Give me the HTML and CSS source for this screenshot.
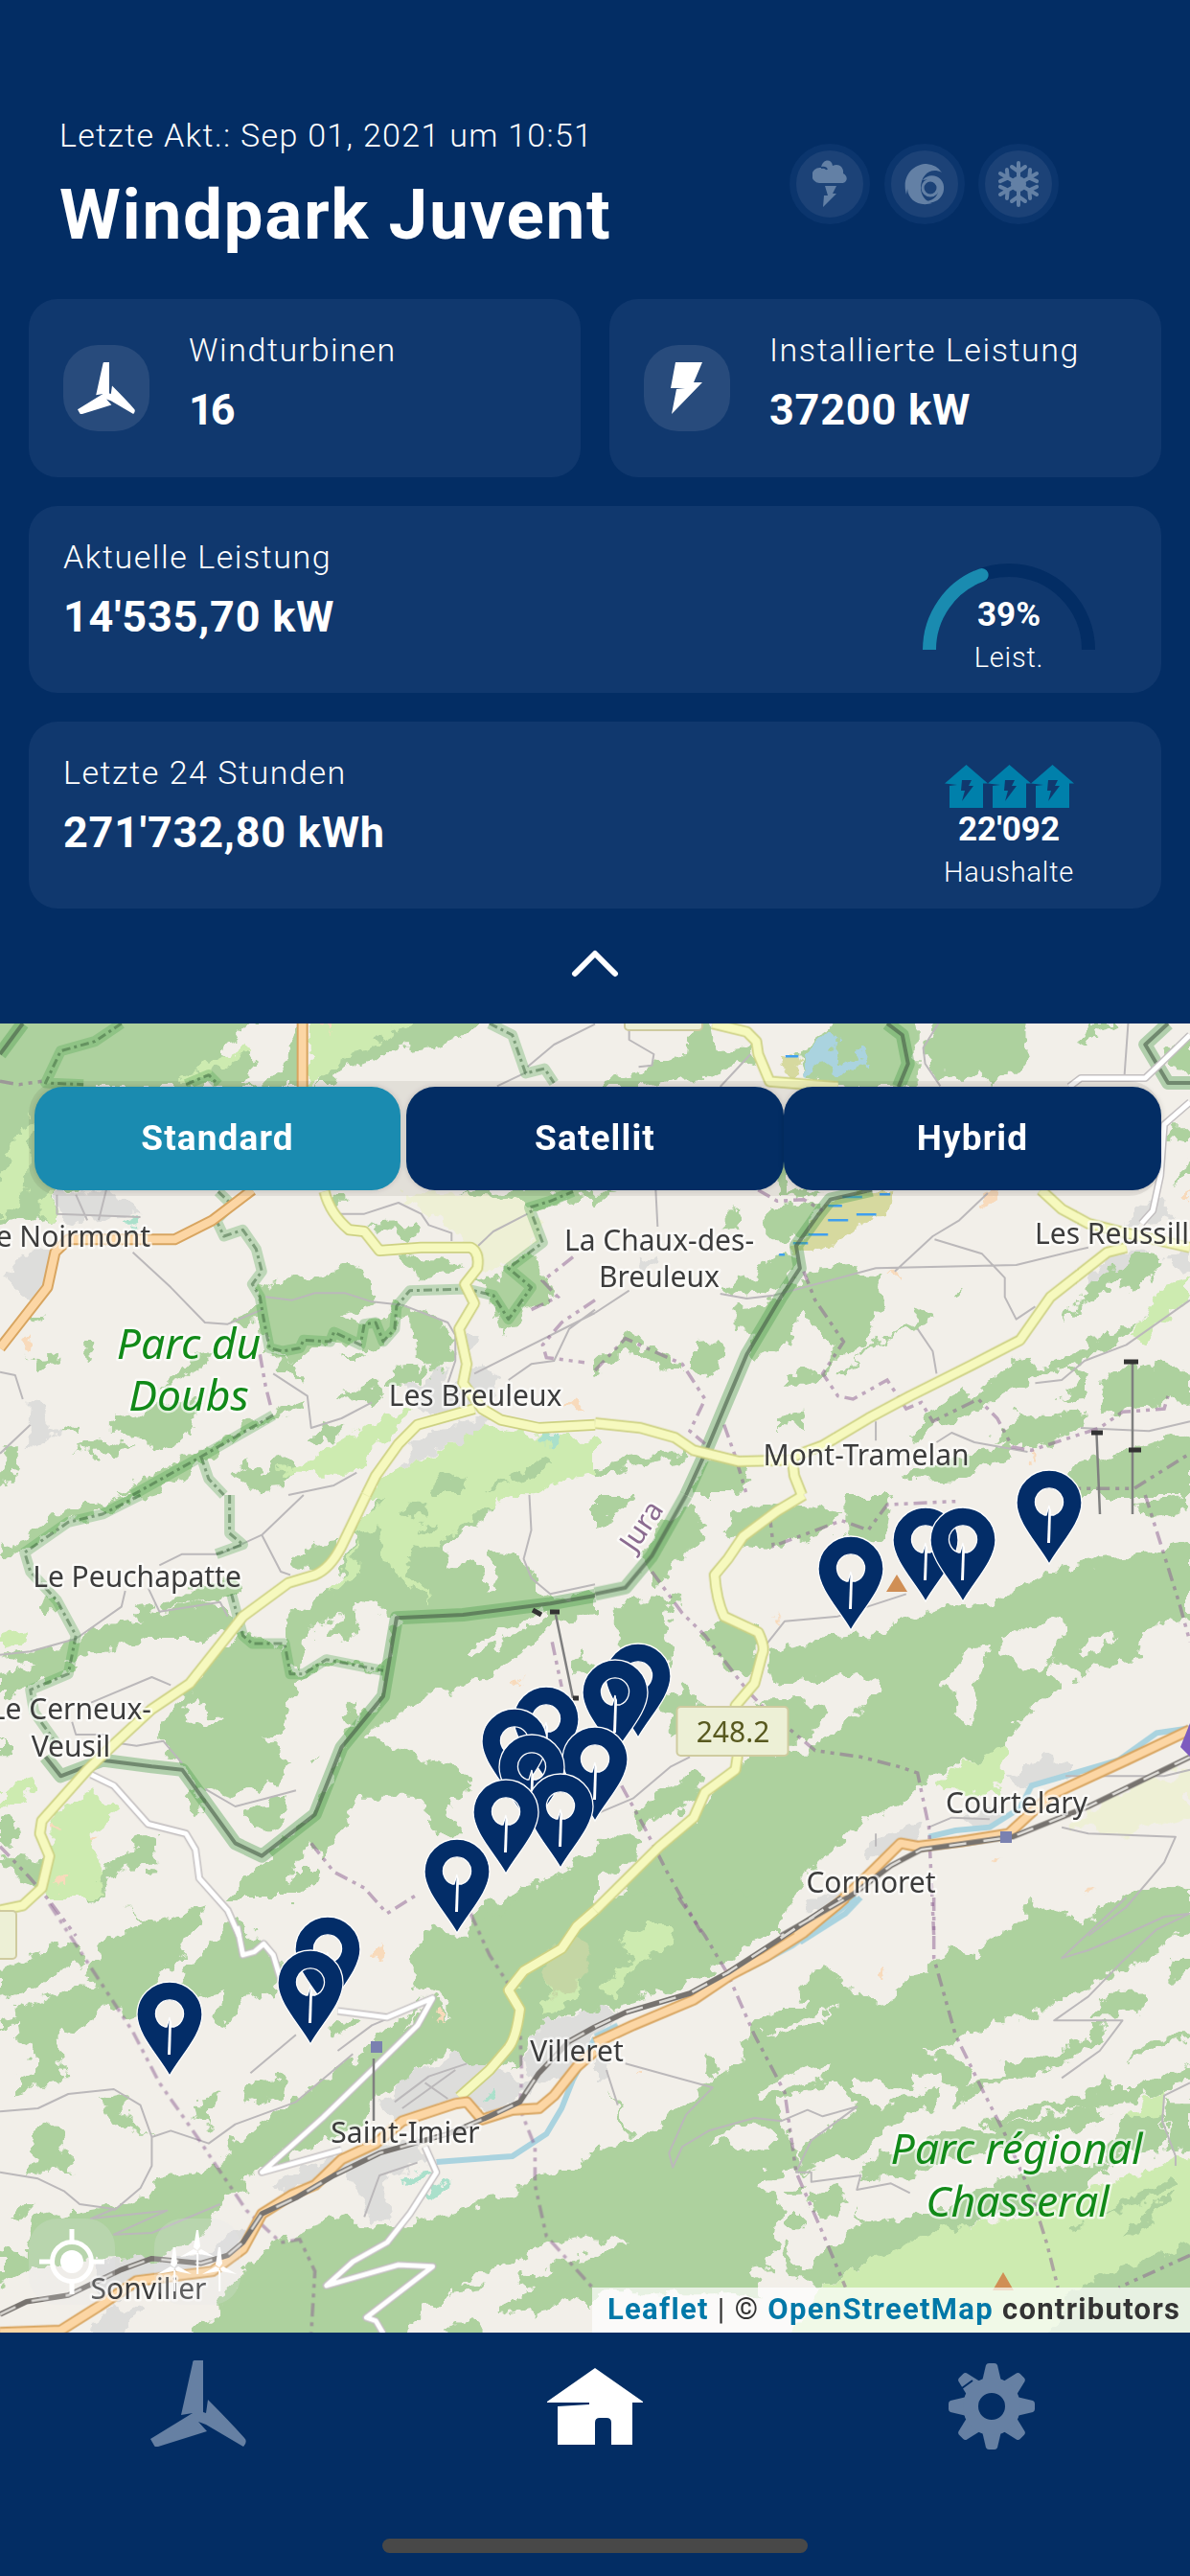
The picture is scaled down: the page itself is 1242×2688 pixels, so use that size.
FILE: index.html
```html
<!DOCTYPE html>
<html lang="de">
<head>
  <meta charset="utf-8">
  <title>Windpark Juvent</title>
  <link rel="stylesheet" href="styles.css">
</head>
<body>
  <!-- shared icons -->
  <svg class="sprite" width="0" height="0">
    <symbol id="turbine" viewBox="0 0 100 90">
      <path d="M46 0h9v54l3 1 2-14q24 24 39 41 2 4-2 8L58 67l-8-3 9 10L8 90q-3 1-4-1L0 82l44-27-12 2L44 3q0-3 2-3z"/>
    </symbol>
    <symbol id="bolt" viewBox="0 0 34 54">
      <path d="M5 0h28l-9 21h9L1 54 6 28l9-1H0z"/>
    </symbol>
    <symbol id="mill" viewBox="0 0 36 46">
      <path d="M17 0h2l2 17-3 4-4-3zM0 28l14-8 4 2-1 3zM36 28l-14-8-3 2 1 3zM17.200 24h2v22h-2z"/>
    </symbol>
    <symbol id="ehouse" viewBox="0 0 45 45">
      <path fill-rule="evenodd" d="M22.500 0 45 19.500h-5V45H5V22l8-1-13-1.500zM18 16l-1 11h4l-3 11 12-16h-5l3-6z"/>
    </symbol>
    <symbol id="pin" viewBox="-36 -100 72 102" overflow="visible">
      <path d="M0 0C-12-21-34-43-34-64a34 34 0 0 1 68 0C34-43 12-21 0 0zM-5-51A14.500 14.500 0 1 1 5-51L1.500-51 0-61-3-51z" fill-rule="evenodd"/>
      <path class="mast" d="M-.500-61 2-56 1-22h-3z"/>
    </symbol>
  </svg>

  <header class="top">
    <div class="head">
      <div>
        <p class="updated">Letzte Akt.: Sep 01, 2021 um 10:51</p>
        <h1>Windpark Juvent</h1>
      </div>
      <div class="weather">
        <span>
          <svg width="36" height="50" viewBox="0 0 36 50">
            <path d="M7 24a8 8 0 0 1 1-16h1C10-1 20-2 21 6c6-3 12 1 11 8 6 3 4 10-1 10zM13 27h12l-4 8h4L11 49l1-12h4z"/>
            <path class="cut" d="M9 8q5-1 6 2"/>
          </svg>
        </span>
        <span>
          <svg width="44" height="44" viewBox="0 0 44 44">
            <path d="M40 10C29 4 18 12 18 26c0 8 5 14 12 16C16 46 5 39 4 27l-1 6C-3 12 12 1 24 1q11 1 16 9z"/>
            <path d="M20 18c8-10 24-3 22 10-1 9-10 16-19 12 10-1 14-7 13-14-4-9-12-9-16-8z"/>
            <circle class="ring" cx="28" cy="26" r="8"/>
          </svg>
        </span>
        <span>
          <svg class="flake" width="44" height="48" viewBox="-22 -24 44 48">
            <g id="arm"><path d="M0 0V-22M-7-18 0-13 7-18"/></g>
            <use href="#arm" transform="rotate(60)"/>
            <use href="#arm" transform="rotate(120)"/>
            <use href="#arm" transform="rotate(180)"/>
            <use href="#arm" transform="rotate(240)"/>
            <use href="#arm" transform="rotate(300)"/>
            <circle r="8"/>
          </svg>
        </span>
      </div>
    </div>

    <div class="cards">
      <div class="card small">
        <div class="icon"><svg width="62" height="54"><use href="#turbine"/></svg></div>
        <div>
          <p class="label">Windturbinen</p>
          <p class="value count">16</p>
        </div>
      </div>
      <div class="card small">
        <div class="icon"><svg width="34" height="54"><use href="#bolt"/></svg></div>
        <div>
          <p class="label">Installierte Leistung</p>
          <p class="value">37200 kW</p>
        </div>
      </div>
      <div class="card wide">
        <div>
          <p class="label">Aktuelle Leistung</p>
          <p class="value">14'535,70 kW</p>
        </div>
        <div class="gauge">
          <svg width="180" height="90" viewBox="0 0 180 90">
            <path class="track" d="M7 97V90A83 83 0 0 1 173 90V97"/>
            <path class="fill" d="M7 97V90A83 83 0 0 1 61.600 12"/>
          </svg>
          <b>39%</b>
          <p>Leist.</p>
        </div>
      </div>
      <div class="card wide">
        <div>
          <p class="label">Letzte 24 Stunden</p>
          <p class="value">271'732,80 kWh</p>
        </div>
        <div class="homes">
          <div class="row">
            <svg width="45" height="45"><use href="#ehouse"/></svg>
            <svg width="45" height="45"><use href="#ehouse"/></svg>
            <svg width="45" height="45"><use href="#ehouse"/></svg>
          </div>
          <b>22'092</b>
          <p>Haushalte</p>
        </div>
      </div>
    </div>

    <svg class="chevron" width="52" height="32" viewBox="0 0 52 32"><path d="M5 27 26 6 47 27"/></svg>
  </header>

  <main class="map">
    <svg class="layer" width="1242" height="1366" viewBox="0 0 1242 1366">
      <defs>
        <filter id="rough" x="0" y="0" width="100%" height="100%" filterUnits="userSpaceOnUse">
          <feTurbulence type="fractalNoise" baseFrequency=".06" numOctaves="3" seed="4"/>
          <feDisplacementMap in="SourceGraphic" scale="24" xChannelSelector="R" yChannelSelector="G"/>
        </filter>

        <g id="secondary">
          <g class="ta"><path d="M855 550Q870 620 920 670L960 675 1000 735 1110 725H1240Q1265 740 1258 790L1225 840 1250 900 1210 980 1230 1090 1220 1150 1270 1230 1320 1265 1420 1290 1568 1280M1250 1230 1100 1280 1050 1340 990 1440 965 1500"/></g>
          <g class="tb"><path d="M310 24 400 50 425 80 430 120 460 205 560 215 640 222M1175 545 1230 605 1300 650 1400 680 1568 725M1400 725 1350 740 1200 880 1120 1015 990 1095 830 1190 720 1260 600 1345 520 1380M0 1275 120 1290 210 1320 260 1360 380 1395 520 1390 525 1440 545 1500"/></g>
          <g class="tc"><path d="M965 0 900 160Q870 230 830 250L760 275 640 380 560 500 500 590 400 670 300 780 230 860 110 1020 105 1060 130 1130 110 1230 60 1285 0 1300"/></g>
          <g class="td"><path d="M550 0 480 50 390 130 350 200 315 250Q320 330 340 380L430 430Q450 480 440 500L420 590 370 660 375 820 370 860 290 930 260 1010 170 1100 0 1300"/></g>
          <g class="te"><path d="M1568 40 1520 90 1480 160 1380 230 1340 290 1370 350Q1360 440 1340 470L1290 540 1210 625"/></g>
        </g>
        <g id="primary">
          <g class="ta"><path d="M797 24V222M665 545 560 640 460 700 380 700 180 700 145 740 125 850 0 1040"/></g>
          <g class="td"><path d="M1568 735 1400 830 1200 940 1090 1060 960 1085 850 1100 805 1090 720 1190 640 1280 530 1380"/></g>
          <g class="te"><path d="M0 1362 160 1355 260 1280 360 1200 560 1170 640 1100 690 990 770 930 830 900 900 820 990 770 1060 700 1200 645 1230 640 1270 695 1350 665 1420 660 1460 620 1520 530 1568 480"/></g>
          <g class="tf"><path d="M0 455 100 400 260 320 360 240 450 185 550 110 660 0"/></g>
        </g>
        <g id="rail">
          <g class="td"><path d="M1568 820 1300 975 1100 1070 860 1110 780 1160 680 1250 490 1380"/></g>
          <g class="te"><path d="M0 1305 70 1265 180 1245 320 1165 400 1130 530 1145 600 1120 640 1080 690 990 780 940 880 870 1000 800 1180 740 1290 685 1370 640 1420 550 1500 450 1568 405"/></g>
          <g class="tf"><path d="M0 405 80 360 250 300 350 235 480 135 650 0"/></g>
        </g>
        <g id="minor">
          <g class="tb"><path d="M1568 60 1490 150 1450 195H1280L1250 222M1568 270 1500 340 1490 500 1470 610 1440 650"/></g>
          <g class="tc"><path d="M240 875 300 910 390 1030 490 1060 515 1110 525 1200 600 1300 630 1380"/></g>
          <g class="te"><path d="M625 90 640 180 670 170 695 145 720 180 740 260M890 355 1020 375 1080 345 1140 315 1100 400 980 540 850 690 690 860 900 790M1120 780 1150 860 1080 990 1020 1080 930 1140 860 1215 1050 1150 1140 1155 965 1315 990 1325 1010 1365"/></g>
        </g>
        <g id="border">
          <g class="ta"><path d="M320 24 250 80 160 110 120 210 220 215M490 215 550 185 575 215M1290 24 1350 60 1385 180 1435 165 1460 210M575 550 610 590 570 640 590 690 640 670 675 730 690 800 665 840 685 880 695 950 710 1040 745 1050 790 1040 800 1015 870 1020 880 990 950 1030 960 965 990 960 1010 1020 1040 980 1045 910 1080 860 1230 855 1300 875 1340 950 1400 850 1340 790 1430 710 1395 600 1450 580 1510 550M350 1500 530 1380 720 1250M530 1380 550 1450 590 1500"/></g>
          <g class="tc"><path d="M370 0 270 60 180 85 65 180 80 240 150 330 200 440 180 560 80 610 90 680 150 780M605 0V120L640 155 570 185M610 310 640 440 665 465H750L765 560H800L860 515 1010 550"/></g>
        </g>
        <g id="canton">
          <g class="ta"><path d="M0 120 60 24"/></g>
          <g class="tb"><path d="M770 24 810 60 825 150 800 222M730 545 620 575 590 620 530 720 540 790 490 880 400 1060 350 1200 290 1370 240 1500M1510 24 1450 90 1510 210H1568"/></g>
          <g class="tc"><path d="M1568 315 1450 340 1220 375 1045 385 1010 630 900 790 830 1000 690 1130 620 1090 480 860 400 850 270 830 160 880 120 820"/></g>
          <g class="td"><path d="M240 0 150 190 80 290 0 310"/></g>
        </g>
      </defs>

      <rect class="land" width="1242" height="1366"/>

      <g filter="url(#rough)">
        <!-- farmland -->
        <g class="farm">
          <path class="ta" d="M1060 550 1390 560 1430 690 1330 790 1280 800 1200 680 1060 570z"/>
          <path class="td" d="M1568 860 1400 920 1250 1040 1400 1060 1568 1010z"/>
        </g>
        <!-- built-up areas -->
        <g class="urban">
          <path class="ta" d="M150 550H310L370 630 200 640 150 620zM10 820 60 740 140 740 120 860 80 900 30 850zM1080 1150 1180 1110V1180L1260 1080 1310 1130 1300 1190 1200 1240 1110 1250zM1200 990 1260 990 1250 1060 1220 1080zM1050 1400 1130 1290 1300 1250 1250 1330 1200 1340 1100 1400zM80 1210 110 1220 125 1290 160 1300 75 1360z"/>
          <path class="tb" d="M1290 840 1370 740 1450 740 1420 780 1340 810zM1500 750 1568 740V810L1520 800zM1400 640 1490 560 1530 620 1420 660zM120 760 160 740 180 770 130 785z"/>
          <path class="td" d="M1080 890 1200 820 1260 830V870L1140 920zM980 1010 1080 960 1060 1040 990 1050zM710 1120 760 1060 860 1030 850 1080 780 1110 730 1160zM570 1270 640 1240 700 1230 640 1300H570z"/>
          <path class="te" d="M1000 660 1060 570 1200 490 1260 510 1360 560 1400 590 1340 660 1300 670 1240 640 1180 650 1060 700zM1380 500 1430 390 1568 360V500L1500 560 1400 600zM820 830 960 790 1100 760 1140 830 1020 880 1010 940 1030 1010H970L950 920 900 850 740 930 720 900zM260 1150 400 1120 520 1130 640 1040V1100L520 1170 300 1250 240 1220zM230 1365 290 1270 370 1300 330 1365z"/>
          <path class="tf" d="M0 350 50 350 50 400 0 420zM0 500 50 520 40 570 0 560z"/>
        </g>
        <!-- forest -->
        <g class="forest">
          <path class="ta" d="M-20 0H700L640 60 570 110 580 130 640 110 680 150 640 200 690 222 760 130 800 24V222H250V545H150L140 640 100 650 60 640-20 660zM1000 75 1050 0H1320L1200 75 1050 110 900 160 880 222H830L850 180 900 120zM690 860 760 820 860 810 950 770 940 800 985 830V900L900 940 960 960 1020 950 1040 905 1080 920 1150 950 1190 990V1080L1150 1130 1100 1080V1020L1060 940 1030 1010 990 1050 940 1030 880 1020 820 1040 780 1080 740 1060 700 1040 690 960 600 965 640 930zM970 660 1100 650V690L1070 715 1050 680zM1060 750 1220 770 1180 810 1120 820 1070 790zM1330 790 1400 740 1430 800 1460 880 1380 920 1330 1000 1300 900 1250 830 1330 810zM1200 545H1568V570L1400 600 1340 570 1240 560z"/>
          <path class="ta" d="M420 1170 520 1060 560 1050 540 1090 470 1150zM290 1270 380 1240 420 1200 540 1210 500 1260 520 1290 440 1360 380 1330 340 1310H290zM190 1360 270 1320 350 1350 300 1380 240 1370zM150 1300 200 1280 205 1300zM320 1500 400 1440 540 1350 700 1250 810 1190 800 1230 720 1260 600 1340 520 1410 400 1500zM620 1440 660 1390 690 1440 740 1380 780 1420 740 1470 660 1480zM820 1330 850 1280 900 1300 870 1340zM0 1440 20 1360 50 1350V1400L20 1460 0 1470zM900 1190 1000 1140 1010 1190 940 1220zM1020 1160 1050 1110 1120 1100 1090 1150zM60 1050 80 1080 160 1070 100 1120zM220 1020H245L250 1065 230 1060zM720 1060 780 1080 800 1160 760 1110 730 1110zM890 1080 960 1050 950 1080zM80 930 110 930 100 960zM870 560H920V590H880z"/>
          <path class="tb" d="M650 0H840V222H660L560 200 530 120 600 60zM900 0H1140V110L1120 185H1080L1045 222 1010 185 900 185 865 100zM250 0H300L310 100 420 90 410 130 350 165 330 200 240 190 130 222H0V210L110 180 240 120zM1270 95 1310 24H1380L1330 60zM1490 130 1568 60V170L1510 160zM470 450H510V545H600L560 580 480 545zM450 600 580 590 560 660 520 700 450 700zM430 820 440 780 500 740 530 760 510 850 440 860 360 870 340 840zM560 800 680 780 690 800 765 800 750 850 755 900 720 1030 640 1060 600 1000 550 930 500 1030 430 1080 400 1060 420 990 370 980V910L430 905 500 870zM260 1020 330 1015 340 1040 330 1100 290 1130 260 1100zM80 1000 230 1090 240 1110 200 1110 90 1040 0 1130V1090zM500 1160 530 1120 590 1115 640 1045 650 1060 600 1130 560 1160zM490 1250 540 1240 550 1290 490 1280zM650 1120 700 1050 850 950V915L885 940 870 970 800 990 690 1070 660 1130zM340 640 370 600 380 660 340 680zM0 545 60 545 0 590zM940 880 980 840 960 890zM1520 340H1568V400L1510 390zM1510 520 1568 470V500z"/>
          <path class="tb" d="M1230 970 1240 930 1290 900 1300 830 1380 790 1420 750 1500 760 1480 800 1400 870 1380 860 1400 825 1340 850 1320 890 1260 930zM830 1310 870 1270 890 1230 960 1180 970 1160 1000 1200 1100 1080 1150 1070 1160 1110 1300 1030 1440 950 1470 900 1400 1010 1260 1090 1170 1130 1080 1180 1020 1230 900 1290 850 1325zM1040 1330 1100 1280 1120 1230 1140 1260 1280 1240 1290 1290 1150 1360zM1220 1200 1270 1150 1250 1090 1300 1110 1290 1190zM1330 1240 1340 1140 1380 1100 1440 1110 1480 1090 1568 1110V1220L1500 1200 1440 1230zM1240 1500 1260 1400 1350 1380 1500 1320 1568 1310V1500zM810 1440 870 1410 1000 1370 1100 1340V1380L960 1450 830 1455zM0 1420 120 1380 250 1355 240 1380 140 1400 0 1450zM250 1480 300 1390 370 1380 400 1450 360 1500H260z"/>
          <path class="tc" d="M0 180 150 60 360 0H400L280 50 160 90 60 180 0 210zM0 510 200 460 240 420 420 370 520 340 590 350 620 400 540 450 400 450 270 480 170 520 190 545 90 600 0 640V560L100 530zM420 345 500 300 620 260 640 300 560 330 430 360zM770 220 830 150 890 140 880 220 830 240zM590 480 640 430 740 470 760 560H800L870 510 1000 545 1050 385 940 340V440L890 460 860 440 900 370 860 390 800 460 790 540 750 530V390L840 310 890 300 900 220 960 60 1000 0H1250L1200 60 1300 20 1290 60 1200 130 1170 160 1180 230 1260 200 1290 310 1310 260 1300 180 1370 190 1400 250 1450 330 1568 300V370L1470 400 1300 560 1100 650 960 750 1060 800 1200 850 1230 890 1220 960 1170 950 1220 1060H1150L1100 950 950 950 880 1080 860 1140 820 1090 750 1200 780 1260H600L650 1200 700 1130 830 1000 900 800 940 700 1000 640 1010 550 940 540 860 530 780 600 740 740 700 760 770 850 720 900 610 950 520 910 430 790 420 700 500 620 520 560zM640 990 760 940 750 1000 720 1060H660zM890 700 940 640 930 720zM240 1260 270 1180 330 1130 370 1060 410 1070 415 1165 330 1170 290 1210 250 1280zM0 1010 40 1020 45 1100H0zM0 1130 110 1150 100 1230 50 1200zM1568 1120 1450 1200 1350 1240 1250 1300 1240 1380H1568zM100 340 140 310 150 370 110 370zM350 350 400 340 400 380 360 380zM480 940 510 920 540 980 510 1000zM1500 520 1540 490 1568 560 1500 560zM820 840 840 810 830 850zM0 760 30 790 20 820H0zM770 1170H840L800 1260H760z"/>
          <path class="td" d="M460 490 550 470 580 450 720 440 850 380 940 345 1060 330 1200 240 1300 210 1460 190 1568 150V380L1440 420 1430 520 1340 530 1280 580 1240 540 1200 520 1220 600 1150 680 1070 790 1000 830 880 890 830 950 720 1010 650 1070 600 1150 550 1210 500 1290 480 1380H0V1330L170 1100 270 1010 300 920 380 850 420 800 560 800 620 740 740 640 750 580 690 560 480 600zM360 60 470 30 650 60 620 110 480 170 400 160 345 120zM60 350 140 310 220 330 180 400 210 480 190 560 150 500 60 480zM290 440 330 380 430 420 420 560 380 560 300 490zM420 640 540 640 610 680 560 770 500 770zM0 0H100L60 60 0 100zM90 1020 150 940 270 860 290 900 260 960 180 1010 120 1040zM0 1110 60 1050 130 1090 100 1140 0 1210zM660 0H780L760 130 700 180 660 120zM1060 1380 1140 1340V1295L1200 1285 1290 1345 1420 1260 1440 1290 1380 1380zM170 640 230 600 300 660 200 740zM170 100 240 40 300 100 150 290 120 220zM1420 30 1568 0V40L1440 70z"/>
          <path class="te" d="M0 230 90 180 200 130 230 200 150 240 100 280 0 310zM0 390 110 320 220 280 340 290 250 380 190 420 100 400 60 370 0 430zM40 350 90 360 160 340 180 370 150 420 170 570 100 590 40 620 45 560 85 540 90 460 50 440zM220 240 280 130 540 30 500 120 470 200 420 240 380 370 330 380 280 300zM500 210 620 60 700 150 760 230 720 300 640 320 600 410 560 400 590 300 500 330 450 310zM340 30 400 120 380 110zM70 860 95 820 90 720 120 700 160 740 190 860H110zM260 640 330 620V680L390 750 290 700zM300 970 400 930 410 880 520 860 600 810V750L640 770 700 700 800 620 960 470 1130 310 980 540 800 740 690 850 640 880V920L580 960 560 1030 410 1130 100 1150 0 1210V1100L70 1110 80 1010zM660 580 750 565 745 610 640 650zM1080 200 1120 100 1220 120 1300 60 1380 0H1568V350L1430 390 1350 540 1340 510 1290 550 1180 480 1080 560 1000 620 960 700 820 780 700 850 1150 310 1180 380V330L1150 290 1080 260zM30 1000 70 950 90 960 50 1010zM510 620 530 630 580 610 550 660 560 720 520 700zM870 380 940 390 900 430 870 420z"/>
          <path class="te" d="M1600 820V1040L1420 1090 1380 1120 1250 1180 1150 1270 1030 1400H560L570 1290 620 1200 680 1130 700 1090 760 1060 920 990 950 1030H1060L1160 1000 1360 920 1420 870zM1180 1210 1280 1220 1270 1240 1190 1250zM1300 1290 1400 1230 1360 1190 1440 1170 1480 1130 1530 1120 1568 1180V1290L1500 1250 1430 1290 1330 1310zM1180 1340 1240 1320 1290 1380H1180zM500 1400 530 1330 600 1320V1400z"/>
          <path class="tf" d="M-30 80 60-10H520L480 100 370 180 200 290-30 370zM540 300 570 230 610 220 660 280 700 290 745 345 800 310 830 240 870 230 940 150 1000 175 1100 90 1140 85V30L1190 20 1280 80 1400-10 1568-30V100L1480 170 1390 230 1330 260 1180 330V360L1040 395 960 450 850 490H940L980 530 985 590 1080 560V510L1120 515 1300 440 1310 390H1340V450L1200 540 1030 600 950 655V600L900 550 840 560 830 605 740 575 680 580 700 630 770 665 790 635 910 600 890 650 740 740 700 810 550 860 530 840 560 760 690 660 640 570 600 570 480 640 490 740 400 700 300 760 400 790 470 770V730L520 740 540 860 440 870 430 910 490 960 480 1060 460 1160 410 1170 440 1240H-30V1130L90 1080-30 1060V820L80 760 150 740 170 690 300 590 320 560 390 520 380 460 420 400 490 345H560z"/>
          <path class="tf" d="M500 1080 540 1165 580 1150 620 1090 720 1020 880 990 1080 880 1180 900 1080 990 900 1060 720 1140 600 1220 530 1200 490 1100zM920 740 1060 720 1300 650 1360 680 1260 730 1000 800 800 880 700 870 720 820 780 800zM1020 700 1200 640 1330 600 1350 540 1370 600H1430L1568 520V570L1440 640 1200 660 1050 730zM1400 510 1440 460 1568 420V440L1450 480zM1300 370 1350 300 1450 295 1440 350 1360 370zM1520 180H1568V250L1510 260zM1350 760 1400 690 1500 670V790L1440 800 1350 830zM1500 640H1568V780L1510 800zM570 940 650 890 660 940 640 1000 580 990zM500 920 550 910V940L510 945zM505 990H545V1030H505zM1050 880 1350 830 1300 920 1080 1000zM300 480 320 560 290 540zM40 600 90 740 70 740zM680 970 720 1020 700 1030z"/>
        </g>
        <!-- clearings -->
        <g class="land">
          <path class="tc" d="M480 680 510 650 560 690 590 700 540 730 500 710zM1220 490 1430 360 1440 380 1240 510zM1010 740 1130 620 1350 600 1330 700 1200 830 1060 800z"/>
          <path class="td" d="M920 600 1000 480 1045 465 1000 590 1020 650 990 720 950 700V620zM1060 450 1190 390 1250 400 1230 450 1200 500 1180 560 1110 540 1080 490zM1280 480 1370 430 1330 490 1290 500z"/>
          <path class="te" d="M490 190 540 80 560 100 510 210z"/>
          <path class="tf" d="M440 425 560 375 650 350 600 380 470 430zM410 620 480 570 630 525 620 550 430 630zM550 850 640 810 700 830 690 860z"/>
        </g>
        <!-- pasture -->
        <g class="grass">
          <path class="ta" d="M480 190 560 150 650 95 655 110 560 180 480 215zM815 0H1110L1000 75 900 140 840 200 815 222zM80 320 30 400 0 520V640L40 600 75 540zM730 1430 830 1380 1000 1260 1080 1240 1000 1350 930 1430zM970 1500 1050 1400 1110 1400 1200 1340 1270 1290 1400 1310 1568 1330V1440L1500 1450 1400 1510zM100 560 145 560 140 640 100 640z"/>
          <path class="tb" d="M1410 1010 1500 850 1568 820V870L1500 950 1450 1030z"/>
          <path class="tc" d="M960 60 1000 30 1020 0H1350L1250 60 1150 160 1090 150 1060 200 1140 340 1090 300 1040 220 1010 210 990 110 940 130V240L870 320 920 200zM0 920 80 880 90 920 0 990zM140 1000 230 920 320 980 260 1040 230 1060 270 1160 260 1260H120V1130L140 1070zM0 450 70 420 80 450 0 480z"/>
          <path class="td" d="M900 900 1000 830 1080 780V850L1060 930 920 920z"/>
          <path class="te" d="M1440 250 1530 230 1520 330 1430 370zM1370 270 1390 290 1370 310z"/>
          <path class="tf" d="M10 290 90 200 70 130 130 90 200 90 210 130 110 200 60 310 20 300zM1600 780 1500 840 1300 920 1080 1010 900 1040 720 1140 600 1221 500 1400H1200L1400 1190 1600 1070zM1400 690 1500 600 1490 680 1410 690z"/>
        </g>
        <g class="forest">
          <path class="ta" d="M1150 1450 1200 1430 1230 1480 1210 1500H1140zM1350 1440 1450 1380 1460 1400 1370 1455zM1280 1490 1320 1440 1340 1470z"/>
          <path class="tc" d="M1060 60 1080 20 1130 20 1120 80zM1100 110 1150 80 1140 120z"/>
          <path class="tf" d="M1330 990 1540 860V900L1400 970zM1240 1030 1290 1010 1260 1050zM1390 1070 1500 930 1520 930 1440 1050zM1250 1230 1600 1070V1400H1180z"/>
        </g>
        <g class="scrub"><path class="te" d="M1440 170 1520 130 1560 180 1540 230 1490 310 1440 300z"/></g>
        <g class="lake"><path class="tb" d="M550 120 610 60 640 70 630 130 690 150 700 105 720 130 690 180 640 170 590 150 555 200z"/></g>
        <g class="marsh"><path class="tb" d="M490 130H530L545 170 520 185 490 160zM600 600 700 545 790 550 760 620 700 670 640 720 550 745 520 740 560 660z"/></g>
        <g class="pitch"><path class="te" d="M1050 880 1140 855 1130 880 1070 900zM1120 920 1190 880V910L1130 935zM1280 620 1300 600 1310 615 1290 630z"/><path class="ta" d="M330 655 350 640 365 660 340 665zM1420 1310H1475V1330H1420z"/></g>
        <g class="yard">
          <path class="ta" d="M847 24H875L865 60zM60 1020 75 1000 85 1030 70 1045zM1490 1225 1515 1195 1530 1220z"/>
          <path class="tb" d="M1025 590 1035 560 1050 570 1040 600zM780 800 800 800 795 815zM1145 1380 1155 1365 1165 1385zM1540 560 1568 545V590z"/>
          <path class="tc" d="M1345 590 1360 565 1380 570 1365 590zM135 1050 145 1020 160 1060zM230 1070 260 1070 240 1085zM140 1215 175 1195 160 1230z"/>
          <path class="td" d="M470 385 480 370 490 395zM1045 1150 1055 1120 1075 1130zM1285 1250 1300 1235 1320 1245 1300 1260z"/>
          <path class="te" d="M980 190 1010 140 1020 180 1000 200zM1145 380 1160 350 1175 380z"/>
          <path class="tf" d="M745 240 765 225 770 245zM100 545 115 535 120 550z"/>
        </g>
      </g>

      <g class="river">
        <path class="td" d="M1568 730 1480 745 1380 830 1150 910 1120 980 1040 1040 950 1050 880 1070M700 1260 660 1310 540 1400"/>
        <path class="te" d="M1150 828 1350 810 1440 740 1480 660 1510 570 1568 440"/>
        <path class="tf" d="M0 435 60 400M400 225 520 150 690 0"/>
      </g>
      <path class="tb reeds" d="M652 567H704M614 595H651M689 622H741M614 640H667M562 685H614M522 712H561M750 559H778M502 127H536M485 748H500"/>

      <!-- tracks -->
      <g class="track-line">
        <path class="ta" d="M350 740 450 850 540 960 600 965 690 920M700 880 770 890 830 868H910L980 895 1060 905 1180 960 1200 1000V1080L1180 1150M890 620 960 620 1050 585 1110 620 1130 655 1190 680V705M1260 720 1300 675 1390 620M1568 26 1460 90 1390 160M1310 220 1390 175M0 1115 40 1125 60 1200M720 1120 810 1190 820 1290 900 1260 980 1210M1250 1120 1568 930M1340 1140 1400 1090 1460 1080 1500 980 1568 920M0 1370 80 1280M760 1500 880 1470 940 1430M150 560V620L370 630M200 560 230 640M280 545 260 640"/>
        <path class="tb" d="M1405 24 1395 190M905 24 865 100 870 150 910 220M330 222 410 120M90 24V75L155 120 150 155 115 160M1035 555 960 640 890 690 790 800M330 870 400 885 470 875 740 790 1110 780 1300 725M895 700 1020 745 1080 820V880L1110 950 1160 910M850 980 890 1050 900 1120M160 545 165 660M0 930 90 860M900 1335 940 1305 1000 1335 1140 1365M1280 1290 1460 1300 1568 1270M1160 1150 1230 1140 1290 1080 1400 1030 1568 890M740 1270V1330"/>
        <path class="tc" d="M800 0 690 125 580 185H480L420 220M690 125 740 240 765 250M330 300 320 350 200 450 80 490 0 500M390 290 420 365 580 335 600 380M1395 0 1400 110 1380 200 1400 260 1450 310 1568 280M540 920 620 975 700 950 780 925M240 650 400 570 450 595M300 775 360 785 430 770 480 840M190 710 200 750H280"/>
        <path class="td" d="M0 1000 100 950 200 850 250 820M450 470 500 395 640 380 820 310M1230 1040 1300 1060 1530 1070 1500 1150 1400 1290 1300 1380M880 1040 940 1010 1040 1015M1240 880 1500 880 1568 860M740 1060V1100"/>
        <path class="te" d="M0 670 100 660 180 615 300 600 370 650 400 750V840L370 910 300 980M400 750 450 730 550 770 620 710 780 640 930 490M0 860 100 880 170 920 210 960 300 975 240 1005 440 980 300 1055 400 1050 580 960M660 550 780 430M890 480 980 400 1040 370M1040 640 1130 560 1230 520M1060 660 1200 540M1120 580 1180 630M960 1000 1000 870 1100 830"/>
        <path class="tf" d="M80 520 310 595 240 680 195 800 205 845 230 780 300 730 420 690 490 700 560 665 600 685 690 655 570 760 530 860H570V890L700 870 690 915 780 895 830 925M1400 0 1230 190 1300 165 1390 120 1500 60 1568 50 1480 100 1390 200 1300 310 1210 385H1390L1330 480 1230 565M1568 580 1500 620 1495 700 1530 810 1530 840M30 540 60 650"/>
      </g>

      <!-- administrative borders -->
      <use href="#border" class="border-glow"/>
      <use href="#canton" class="canton-glow"/>
      <g class="commune">
        <path class="ta" d="M685 1060 700 1160 715 1230M1510 755 1430 830 1470 880 1400 920M1568 890 1480 960 1430 1030 1440 1070 1540 1085M0 205 50 215 110 205"/>
        <path class="tb" d="M550 800 580 890 655 1020 600 1120 640 1190 680 1200 770 1140 820 1230 860 1210 890 1270 1010 1200 1060 1260 1100 1350 1150 1360 1330 1290 1390 1240 1500 1230 1510 1190M0 1110 80 1010 230 1090 290 1200 250 1300 290 1340M340 1280 370 1380 400 1500M430 545 480 580 550 575 600 610M1220 1480H1420L1568 1370"/>
        <path class="tc" d="M820 1090 880 1180 960 1230 1020 1310 1100 1250M0 1100 80 1200 130 1270 200 1380M1455 460 1480 600"/>
        <path class="td" d="M150 240 230 370 290 440 400 610 440 660 540 760 580 800 700 820 800 850 850 870 880 1040 893 1380M460 60 470 160 650 80 720 110 770 30 950 20M1450 0 1490 150 1540 340 1568 460M70 910 130 1040 190 1180 280 1370"/>
        <path class="te" d="M130 20 240 220 350 420 420 580 520 750 570 840 650 980 740 1080 790 1070 830 1170 820 1365M1240 50 1290 180 1350 290 1370 400 1375 560 1370 660 1410 780V900L1440 1060 1568 1230"/>
        <path class="tf" d="M220 0 290 120 350 240 420 430 500 610 530 860 600 1050 660 1220M893 0V190L950 430 1020 600 1080 740 1150 930 1190 1080 1220 1221M1568 1120 1380 1221"/>
      </g>
      <use href="#border" class="border-line"/>
      <use href="#canton" class="canton-line"/>

      <!-- roads -->
      <use href="#minor" class="minor-case"/>
      <use href="#minor" class="minor-fill"/>
      <use href="#secondary" class="sec-case"/>
      <use href="#secondary" class="sec-fill"/>
      <use href="#primary" class="prim-case"/>
      <use href="#primary" class="prim-fill"/>
      <use href="#rail" class="rail-case"/>
      <use href="#rail" class="rail-fill"/>
      <path class="cable" d="M1182 354V512M1144.500 428 1148 512M580 617 598 704M390 1080V1145"/>
      <path class="pylon" d="M1173 353H1188M1139 427H1151M1178 445H1191M556 612 565 617M574 614H584M598 704H604"/>

      <g class="station">
        <rect x="387" y="1062" width="12" height="12"/>
        <rect x="1044" y="843" width="12" height="12"/>
        <path class="rail-hub" d="M1242 730V765L1232 755z"/>
      </g>
      <g class="peak">
        <path d="M925 593 936 575 947 593zM1036 1322 1047 1303 1058 1322zM144 141 150 127 156 141z"/>
      </g>

      <rect class="shield" x="706.500" y="713" width="116" height="51" rx="4"/>
      <rect class="shield" x="-20" y="926" width="37" height="50" rx="4"/>
      <rect class="shield" x="652" y="-30" width="81" height="37" rx="4"/>
      <text class="ref" x="765" y="750">248.2</text>

      <g class="place">
        <text x="157" y="233" text-anchor="end">Le Noirmont</text>
        <text x="496" y="399">Les Breuleux</text>
        <text x="688" y="237">La Chaux-des-</text>
        <text x="688" y="275">Breuleux</text>
        <text x="1080" y="230" text-anchor="start">Les Reussilles</text>
        <text x="904" y="461">Mont-Tramelan</text>
        <text x="143" y="588">Le Peuchapatte</text>
        <text x="158" y="726" text-anchor="end">Le Cerneux-</text>
        <text x="74" y="765">Veusil</text>
        <text x="1061" y="824">Courtelary</text>
        <text x="909" y="907">Cormoret</text>
        <text x="602" y="1083">Villeret</text>
        <text x="423" y="1168">Saint-Imier</text>
        <text x="155" y="1331">Sonvilier</text>
      </g>
      <g class="park">
        <text x="197" y="350">Parc du</text>
        <text x="197" y="404">Doubs</text>
        <text x="1061" y="1190">Parc régional</text>
        <text x="1062" y="1245">Chasseral</text>
      </g>
      <text class="region" transform="translate(678 530) rotate(-56)">Jura</text>

      <!-- turbines -->
      <g class="pins">
        <use href="#pin" x="1059" y="464" width="72" height="102"/>
        <use href="#pin" x="930" y="503" width="72" height="102"/>
        <use href="#pin" x="969" y="503" width="72" height="102"/>
        <use href="#pin" x="852" y="533" width="72" height="102"/>
        <use href="#pin" x="630" y="645" width="72" height="102"/>
        <use href="#pin" x="606" y="662" width="72" height="102"/>
        <use href="#pin" x="534" y="690" width="72" height="102"/>
        <use href="#pin" x="501" y="713" width="72" height="102"/>
        <use href="#pin" x="585" y="732" width="72" height="102"/>
        <use href="#pin" x="519" y="740" width="72" height="102"/>
        <use href="#pin" x="549" y="781" width="72" height="102"/>
        <use href="#pin" x="492" y="787" width="72" height="102"/>
        <use href="#pin" x="441" y="849" width="72" height="102"/>
        <use href="#pin" x="306" y="930" width="72" height="102"/>
        <use href="#pin" x="288" y="965" width="72" height="102"/>
        <use href="#pin" x="141" y="998" width="72" height="102"/>
      </g>
    </svg>

    <div class="switch">
      <button class="active">Standard</button>
      <button>Satellit</button>
      <button>Hybrid</button>
    </div>

    <div class="tools">
      <span>
        <svg class="locate" width="70" height="70" viewBox="-35 -35 70 70">
          <circle r="20.500"/>
          <circle class="dot" r="12"/>
          <path d="M0-34V-22M0 34V22M-34 0H-22M34 0H22"/>
        </svg>
      </span>
      <span>
        <svg class="mills" width="84" height="66" viewBox="0 0 84 66">
          <use href="#mill" x="24" y="0" width="36" height="46"/>
          <use href="#mill" x="0" y="18" width="36" height="46"/>
          <use href="#mill" x="47" y="18" width="36" height="46"/>
        </svg>
      </span>
    </div>

    <div class="attribution"><a>Leaflet</a> <i>|</i> © <a>OpenStreetMap</a> contributors</div>
  </main>

  <nav>
    <svg class="n-turbine" width="100" height="90"><use href="#turbine"/></svg>
    <svg class="n-home" width="100" height="80" viewBox="0 0 100 80">
      <path d="M50 0 100 35v1H89V80H67V57q0-5-5-5h-7q-5 0-5 5V80H11V40l33-2v-2H0v-1z"/>
    </svg>
    <svg class="n-gear" width="90" height="90" viewBox="-45 -45 90 90">
      <g id="tooth"><path d="M-10-26-6-43q1-2 3-2H3q2 0 3 2L10-26z"/></g>
      <use href="#tooth" transform="rotate(45)"/>
      <use href="#tooth" transform="rotate(90)"/>
      <use href="#tooth" transform="rotate(135)"/>
      <use href="#tooth" transform="rotate(180)"/>
      <use href="#tooth" transform="rotate(225)"/>
      <use href="#tooth" transform="rotate(270)"/>
      <use href="#tooth" transform="rotate(315)"/>
      <circle class="wheel" r="22"/>
      <path class="slit" d="M-31-19-20-27"/>
    </svg>
  </nav>
  <div class="home-bar"></div>
</body>
</html>
```
FILE: styles.css
```css
* {
  box-sizing: border-box;
}

body {
  margin: 0;
  width: 1242px;
  height: 2688px;
  background-color: #032d64;
  color: #fff;
  font-family: Roboto, "Liberation Sans", sans-serif;
  overflow: hidden;
}

p, h1 {
  margin: 0;
  white-space: nowrap;
}

.sprite {
  display: block;
}

/* top panel */
.top {
  height: 1068px;
  padding-top: 120px;
}

.head {
  display: flex;
  justify-content: space-between;
  height: 192px;
  padding: 0 137px 0 62px;
}

.updated {
  font-size: 34px;
  font-weight: 300;
  line-height: 42px;
  letter-spacing: 1.3px;
}

h1 {
  margin-top: 17px;
  font-size: 73px;
  font-weight: 700;
  line-height: 90px;
  letter-spacing: 1.600px;
}

.weather {
  display: flex;
  gap: 14.500px;
  padding-top: 30px;
}

.weather span {
  display: flex;
  align-items: center;
  justify-content: center;
  width: 84px;
  height: 84px;
  border: 7px solid #0b356d;
  border-radius: 50%;
  background-color: #1c4277;
}

.weather svg {
  fill: #6380a5;
}

.cut {
  fill: none;
  stroke: #1c4277;
  stroke-width: 2;
}

.ring {
  fill: none;
  stroke: #6380a5;
  stroke-width: 3;
}

.flake path {
  fill: none;
  stroke: #6380a5;
  stroke-width: 4;
  stroke-linecap: round;
}

.cards {
  display: grid;
  grid-template-columns: 576px 576px;
  gap: 30px;
  padding: 0 30px;
}

.card {
  display: flex;
  border-radius: 30px;
  background-color: #10386e;
}

.small {
  height: 186px;
  padding: 29px 36px 0;
  gap: 41px;
}

.icon {
  display: flex;
  align-items: center;
  justify-content: center;
  width: 90px;
  height: 90px;
  margin-top: 19px;
  border-radius: 36px;
  background-color: #284b7c;
  fill: #fff;
}

.wide {
  grid-column: span 2;
  justify-content: space-between;
  height: 195px;
  padding: 29px 36px 0;
}

.label {
  font-size: 34px;
  font-weight: 300;
  line-height: 48px;
  letter-spacing: 1.550px;
}

.value {
  margin-top: 11px;
  font-size: 45px;
  font-weight: 700;
  line-height: 56px;
  letter-spacing: .8px;
}

.count {
  letter-spacing: -3px;
}

.gauge, .homes {
  width: 180px;
  margin: 31px 33px 0 0;
  text-align: center;
}

.gauge svg {
  display: block;
}

.gauge path {
  fill: none;
  stroke-width: 14;
}

.gauge .track {
  stroke: #032d64;
}

.gauge .fill {
  stroke: #1a8bb0;
  stroke-linecap: round;
}

.gauge b, .homes b {
  display: block;
  font-size: 35px;
  line-height: 40px;
}

.gauge b {
  margin-top: -56px;
}

.gauge p, .homes p {
  margin-top: 6px;
  font-size: 29px;
  font-weight: 300;
  line-height: 36px;
  letter-spacing: .8px;
}

.homes {
  margin-top: 16px;
}

.row {
  display: flex;
  justify-content: center;
  margin-bottom: 3px;
  fill: #0080ab;
}

.chevron {
  display: block;
  margin: 41px auto 0;
  fill: none;
  stroke: #fff;
  stroke-width: 6;
  stroke-linecap: round;
  stroke-linejoin: round;
}

/* map */
.map {
  position: relative;
  height: 1366px;
  overflow: hidden;
}

.layer {
  display: block;
}

.layer path {
  vector-effect: non-scaling-stroke;
}

.ta { transform: translate(0, -8px) scale(.39605, .33333); }
.tb { transform: translate(621px, -8px) scale(.39605, .33333); }
.tc { transform: translate(0, 492px) scale(.39605, .33333); }
.td { transform: translate(621px, 492px) scale(.39605, .33333); }
.te { transform: translate(0, 912px) scale(.39605, .33333); }
.tf { transform: translate(621px, 912px) scale(.39605, .33333); }

.land { fill: #f2efe9; }
.farm { fill: #eef0d5; }
.urban { fill: #dddddb; }
.forest { fill: #add19e; }
.grass { fill: #cdebb0; }
.scrub { fill: #c4d6a4; }
.lake { fill: #aad3df; }
.marsh { fill: #d6d99f; }
.pitch { fill: #aae0cb; }
.yard { fill: #f8dabb; }
.peak { fill: #d08f55; }

.river {
  fill: none;
  stroke: #aad3df;
  stroke-width: 6;
}

.reeds {
  fill: none;
  stroke: #3f9fef;
  stroke-width: 2.5;
}

.track-line {
  fill: none;
  stroke: #bbb8ba;
  stroke-width: 2;
  stroke-linejoin: round;
}

.border-glow, .canton-glow, .border-line, .canton-line {
  fill: none;
  stroke-linejoin: round;
}

.border-glow {
  stroke: rgba(80, 165, 80, .32);
  stroke-width: 11;
}

.canton-glow {
  stroke: rgba(80, 160, 80, .4);
  stroke-width: 14;
}

.border-line {
  stroke: rgba(60, 100, 60, .5);
  stroke-width: 3;
  stroke-dasharray: 9 4 3 4;
}

.canton-line {
  stroke: rgba(70, 90, 70, .6);
  stroke-width: 4;
}

.commune {
  fill: none;
  stroke: rgba(140, 95, 145, .5);
  stroke-width: 3.5;
  stroke-dasharray: 14 6 4 6 4 6;
}

.minor-case, .minor-fill, .sec-case, .sec-fill,
.prim-case, .prim-fill, .rail-case, .rail-fill {
  fill: none;
  stroke-linejoin: round;
}

.minor-case { stroke: #c3bfc0; stroke-width: 8; }
.minor-fill { stroke: #fff; stroke-width: 5; }
.sec-case { stroke: #cdd183; stroke-width: 12; }
.sec-fill { stroke: #f6f9be; stroke-width: 8.5; }
.prim-case { stroke: #d8a560; stroke-width: 12; }
.prim-fill { stroke: #fcd6a4; stroke-width: 8; }
.rail-case { stroke: #77736f; stroke-width: 5.5; }
.rail-fill { stroke: #dcdad6; stroke-width: 2.5; stroke-dasharray: 18 18; }

.cable {
  stroke: #7f7f7f;
  stroke-width: 2.5;
}

.pylon {
  stroke: #333;
  stroke-width: 5;
}

.station {
  fill: #7a81b0;
}

.rail-hub {
  fill: #7d5bbf;
}

.shield {
  fill: #edf0d6;
  stroke: #cfcb9f;
  stroke-width: 2;
}

.layer text {
  font-family: "Noto Sans", "Open Sans", sans-serif;
  text-anchor: middle;
  paint-order: stroke;
  stroke: rgba(255, 255, 255, .65);
  stroke-width: 5;
  stroke-linejoin: round;
}

.layer .ref {
  fill: #58591f;
  font-size: 30px;
  stroke: none;
}

.place text {
  fill: #3c3c3c;
  font-size: 30px;
}

.place text[text-anchor="end"] {
  text-anchor: end;
}

.place text[text-anchor="start"] {
  text-anchor: start;
}

.park text {
  fill: #118a18;
  font-size: 44.5px;
  font-style: italic;
}

.layer .region {
  fill: #8b6b90;
  font-size: 30px;
}

.pins {
  fill: #032d68;
  stroke: #fff;
  stroke-width: 1.3;
}

.mast {
  fill: #fff;
  stroke: none;
}

.switch {
  position: absolute;
  top: 60px;
  left: 30px;
  display: flex;
  width: 1182px;
  height: 120px;
  padding: 6px 0 6px 6px;
  border-radius: 34px;
  background-color: rgba(30, 20, 0, .07);
}

.switch button {
  width: 394px;
  height: 108px;
  padding: 0 0 2px;
  border: none;
  border-radius: 30px;
  background-color: #032d64;
  color: #fff;
  font-family: inherit;
  font-size: 37px;
  font-weight: 700;
  letter-spacing: 1.1px;
  box-shadow: 0 0 6px rgba(0, 0, 0, .15);
}

.switch .active {
  width: 382px;
  margin-right: 6px;
  background-color: #1a8bb0;
}

.tools {
  position: absolute;
  left: 30px;
  bottom: 29px;
  display: flex;
  gap: 41px;
}

.tools span {
  display: flex;
  align-items: center;
  justify-content: center;
  width: 90px;
  height: 90px;
  border-radius: 30px;
  background-color: rgba(230, 230, 235, .2);
}

.locate {
  fill: none;
  stroke: #fff;
  stroke-width: 5;
}

.locate .dot {
  fill: #fff;
  stroke: none;
}

.mills {
  fill: #fff;
}

.attribution {
  position: absolute;
  right: 0;
  bottom: 0;
  width: 624px;
  height: 47px;
  padding-left: 16px;
  background-color: rgba(255, 255, 255, .7);
  color: #333;
  font-size: 31px;
  font-weight: 700;
  line-height: 45px;
  letter-spacing: 1.300px;
  white-space: nowrap;
}

.attribution a {
  color: #0078a8;
}

.attribution i {
  font-style: normal;
  font-weight: 400;
}

/* bottom bar */
nav {
  display: flex;
  align-items: flex-start;
  justify-content: space-between;
  height: 215px;
  padding: 29px 162px 0 157px;
  fill: #6680a3;
}

.n-home {
  margin: 8px 0 0 -5px;
  fill: #fff;
}

.n-gear {
  margin-top: 3px;
}

.wheel {
  fill: none;
  stroke: #6680a3;
  stroke-width: 16;
}

.slit {
  stroke: #032d64;
  stroke-width: 2;
}

.home-bar {
  width: 444px;
  height: 15px;
  margin: 0 auto;
  border-radius: 8px;
  background-color: #484848;
}
```
